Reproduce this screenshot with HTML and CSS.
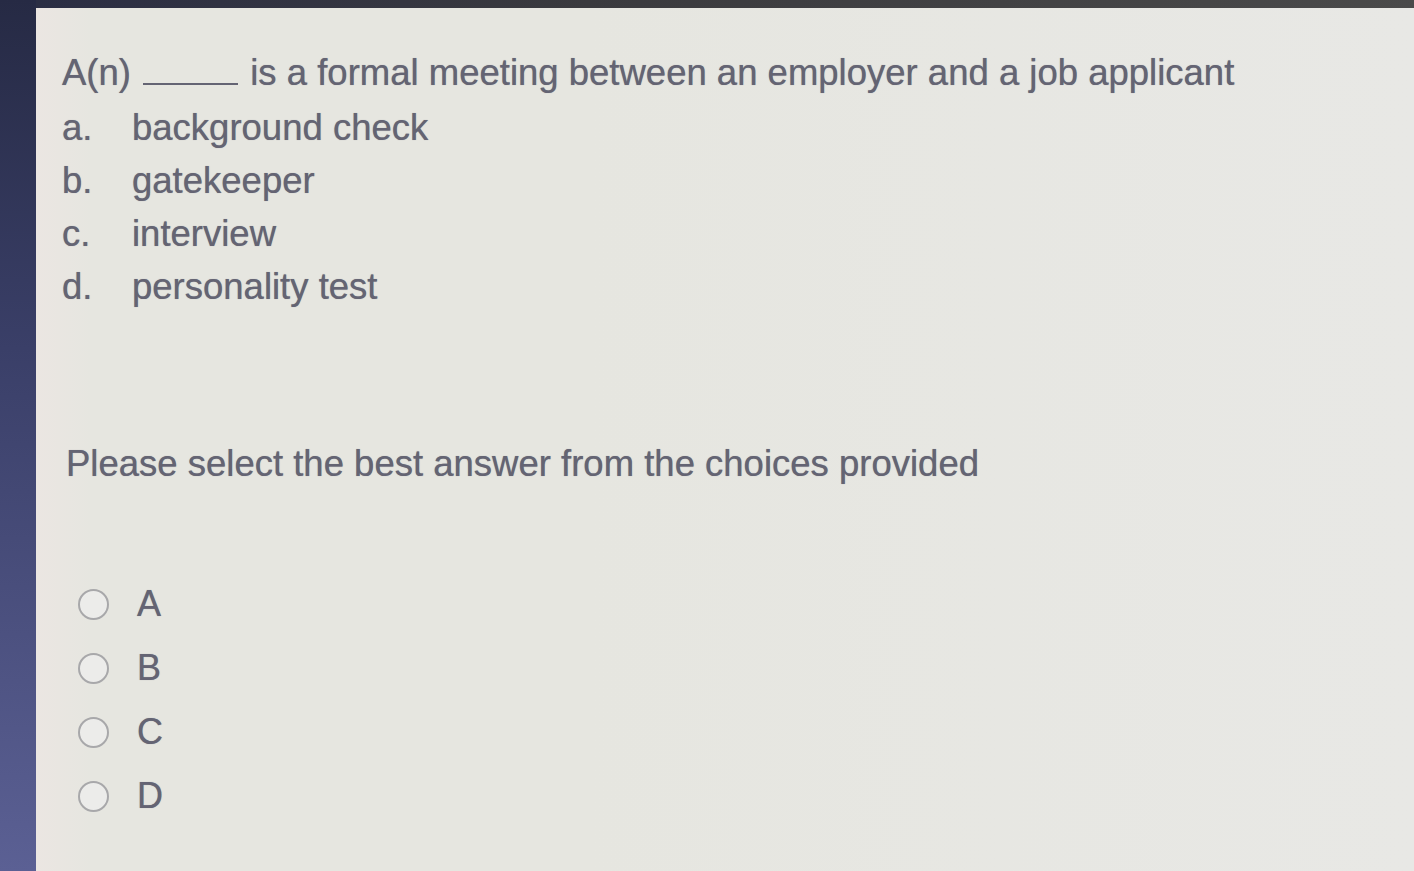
FILE: index.html
```html
<!DOCTYPE html>
<html>
<head>
<meta charset="utf-8">
<link rel="stylesheet" href="styles.css">
</head>
<body>
<div class="screen">
  <div class="bezel-left"></div>
  <div class="main">
    <div class="bezel-top"></div>
    <div class="content">
      <p class="question">A(n) <span class="blank"></span> is a formal meeting between an employer and a job applicant</p>
      <ol class="choices">
        <li><span class="lbl">a.</span><span>background check</span></li>
        <li><span class="lbl">b.</span><span>gatekeeper</span></li>
        <li><span class="lbl">c.</span><span>interview</span></li>
        <li><span class="lbl">d.</span><span>personality test</span></li>
      </ol>
      <p class="prompt">Please select the best answer from the choices provided</p>
      <div class="radios">
        <label class="radio"><span class="circle"></span><span>A</span></label>
        <label class="radio"><span class="circle"></span><span>B</span></label>
        <label class="radio"><span class="circle"></span><span>C</span></label>
        <label class="radio"><span class="circle"></span><span>D</span></label>
      </div>
    </div>
  </div>
</div>
</body>
</html>
```
FILE: styles.css
```css
html, body {
  margin: 0;
  padding: 0;
  height: 100%;
  overflow: hidden;
}
.screen {
  display: flex;
  width: 1414px;
  height: 871px;
  background: #e5e5df;
  font-family: "Liberation Sans", Arial, sans-serif;
  color: #646473;
}
.bezel-left {
  width: 36px;
  flex: none;
  background: linear-gradient(180deg, #262a44 0%, #3a3f68 40%, #5b6094 100%);
  box-shadow: 2px 0 3px rgba(40,40,60,0.4);
}
.main {
  flex: 1;
  display: flex;
  flex-direction: column;
  background: linear-gradient(90deg, #ebe6e2 0%, #e6e6e0 4%, #e6e6e0 40%, #e8e8e5 100%);
}
.bezel-top {
  height: 8px;
  background: linear-gradient(90deg, #2b2e44, #3a3a3e 40%, #4a4a4a);
}
.content {
  padding: 36px 0 0 26px;
  text-shadow: 0 0 0.7px rgba(100,100,115,0.8);
}
.question {
  margin: 0;
  font-size: 36.5px;
  line-height: 57px;
}
.blank {
  display: inline-block;
  width: 95px;
  border-bottom: 2px solid #646473;
  margin: 0 2px;
}
.choices {
  list-style: none;
  margin: 0;
  padding: 0;
  font-size: 36.5px;
}
.choices li {
  display: flex;
  height: 53px;
  align-items: center;
}
.lbl {
  width: 70px;
}
.prompt {
  margin: 131px 0 0 4px;
  font-size: 36.5px;
  line-height: 40px;
}
.radios {
  margin-top: 88px;
  display: flex;
  flex-direction: column;
  padding-left: 16px;
}
.radio {
  display: flex;
  align-items: center;
  height: 64px;
  font-size: 36px;
}
.circle {
  width: 27px;
  height: 27px;
  border: 2px solid #a8a8aa;
  border-radius: 50%;
  background: #ececea;
  margin-right: 28px;
}
```
